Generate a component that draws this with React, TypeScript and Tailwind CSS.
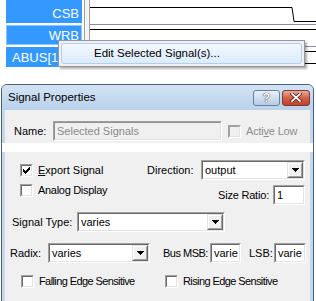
import React from "react";

function Check({ checked = false, disabled = false }: { checked?: boolean; disabled?: boolean }) {
  return (
    <div className="w-[13px] h-[13px] shrink-0 border border-t-[#a0a0a0] border-l-[#a0a0a0] border-b-white border-r-white">
      <div
        className={
          disabled
            ? "w-full h-full border border-t-[#a0a0a0] border-l-[#a0a0a0] border-b-[#e3e3e3] border-r-[#e3e3e3] bg-[#f0f0f0]"
            : "w-full h-full border border-t-[#696969] border-l-[#696969] border-b-[#e3e3e3] border-r-[#e3e3e3] bg-white flex items-center justify-center"
        }
      >
        {checked && (
          <svg width="7" height="7" viewBox="0 0 7 7" shapeRendering="crispEdges">
            <polygon points="0,2 2,4 7,-1 7,2 2,7 0,5" fill="#000" />
          </svg>
        )}
      </div>
    </div>
  );
}

function Sunken({ className, children, disabled = false }: { className: string; children?: React.ReactNode; disabled?: boolean }) {
  return (
    <div className={"h-[20px] shrink-0 border border-t-[#a0a0a0] border-l-[#a0a0a0] border-b-white border-r-white " + className}>
      <div
        className={
          disabled
            ? "w-full h-full border border-t-[#8e8f8f] border-l-[#8e8f8f] border-b-[#e3e3e3] border-r-[#e3e3e3] bg-[#f0f0f0] flex items-center overflow-hidden"
            : "w-full h-full border border-t-[#696969] border-l-[#696969] border-b-[#e3e3e3] border-r-[#e3e3e3] bg-white flex items-center overflow-hidden"
        }
      >
        {children}
      </div>
    </div>
  );
}

function DropBtn() {
  return (
    <div className="w-[16px] h-full shrink-0 border border-t-[#e3e3e3] border-l-[#e3e3e3] border-b-[#696969] border-r-[#696969] bg-[#f0f0f0]">
      <div className="w-full h-full border border-t-white border-l-white border-b-[#a0a0a0] border-r-[#a0a0a0] flex items-center justify-center">
        <svg width="7" height="4" viewBox="0 0 7 4" shapeRendering="crispEdges">
          <polygon points="0,0 7,0 3.5,4" fill="#000" />
        </svg>
      </div>
    </div>
  );
}

function Combo({ className, value }: { className: string; value: string }) {
  return (
    <Sunken className={className}>
      <span className="flex-1 pl-[2px] overflow-hidden whitespace-nowrap leading-none">{value}</span>
      <DropBtn />
    </Sunken>
  );
}

function Field({ className, value }: { className: string; value: string }) {
  return (
    <Sunken className={className}>
      <span className="pl-[2px] whitespace-nowrap leading-none">{value}</span>
    </Sunken>
  );
}

export default function App() {
  return (
    <div className="w-[316px] h-[301px] bg-white overflow-hidden font-['Liberation_Sans',Arial,sans-serif] text-[11px] text-black">
      {/* waveform viewer */}
      <div className="relative h-[67px] flex">
        <div className="w-[84px] pl-[6px] pr-[2px] flex flex-col gap-[2px]">
          <div className="h-[23px] bg-[#3399ff] text-white text-[13px] flex items-end justify-end pr-[3px] pb-[3px] leading-none">CSB</div>
          <div className="h-[20px] bg-[#3399ff] border border-[#8cc4ff] text-white text-[13px] flex items-center justify-end pr-[2px] leading-none">WRB</div>
          <div className="h-[20px] bg-[#3399ff] text-white text-[13px] flex items-center pl-[6px] leading-none whitespace-nowrap overflow-hidden">ABUS[15:0]</div>
        </div>
        <div className="w-[6px] border-l border-r border-[#a0a0a0] bg-[#f4f4f4]" />
        <div className="flex-1 relative">
          <svg width="226" height="67" viewBox="0 0 226 67" className="absolute left-0 top-0" shapeRendering="crispEdges">
            <path d="M0 7.5 H202 L204 21.5 H226" stroke="#000" strokeWidth="1" fill="none" shapeRendering="auto" />
            <line x1="0" y1="24.5" x2="226" y2="24.5" stroke="#8c8ca0" />
            <line x1="0" y1="29.5" x2="226" y2="29.5" stroke="#000" />
            <line x1="0" y1="46.5" x2="226" y2="46.5" stroke="#8c8ca0" />
            <line x1="0" y1="51.5" x2="226" y2="51.5" stroke="#000" />
            <line x1="0" y1="63.5" x2="226" y2="63.5" stroke="#000" />
          </svg>
        </div>
        {/* context menu */}
        <div className="absolute left-[58px] top-[40px] w-[247px] h-[27px] bg-[#f0f0f0] border border-[#979797] shadow-[2px_2px_2px_rgba(0,0,0,0.3)] p-[2px]">
          <div className="relative h-full rounded-[3px] border border-[#aecff7] bg-gradient-to-b from-[#f2f8fe] to-[#dcebfb] flex items-center pl-[32px] text-[11.5px]">
            Edit Selected Signal(s)...
          </div>
        </div>
      </div>

      {/* dialog */}
      <div className="mt-[17px] ml-[1px] w-[313px] h-[218px] border border-[#4c5e78] rounded-t-[6px] overflow-hidden bg-[#c4d8ee]">
        <div className="h-[25px] flex items-center bg-gradient-to-b from-[#d3e3f4] to-[#b9d1ea] pl-[6px] pr-[3px]">
          <span className="text-[11.5px] flex-1">Signal Properties</span>
          <div className="w-[27px] h-[16px] rounded-[3px] border border-[#6c7f99] bg-gradient-to-b from-[#e9f1fa] to-[#b6cbe4] flex items-center justify-center text-white font-bold text-[12px] leading-none [text-shadow:0_0_1px_#334,0_0_1px_#334]">
            ?
          </div>
          <div className="ml-[2px] w-[28px] h-[16px] rounded-[3px] border border-[#7a3a30] bg-gradient-to-b from-[#e9a99a] via-[#d2604a] to-[#c2412c] flex items-center justify-center">
            <svg width="12" height="9" viewBox="0 0 12 9">
              <path d="M2 1 L10 8 M10 1 L2 8" stroke="#4a1c14" strokeWidth="3.4" strokeLinecap="square" />
              <path d="M2 1 L10 8 M10 1 L2 8" stroke="#fff" strokeWidth="1.8" strokeLinecap="square" />
            </svg>
          </div>
        </div>
        {/* name section */}
        <div className="h-[33px] mx-[3px] bg-[#f0f0f0] flex items-start pt-[11px] pl-[9px]">
          <span className="w-[39px] h-[20px] flex items-center">Name:</span>
          <Sunken className="w-[169px]" disabled>
            <span className="pl-[2px] text-[#8a8a8a] leading-none">Selected Signals</span>
          </Sunken>
          <div className="ml-[6px] h-[20px] flex items-center gap-[5px] text-[#8d8d8d]">
            <Check disabled />
            <span className="whitespace-nowrap tracking-[-0.2px]">
              Acti<span className="underline">v</span>e Low
            </span>
          </div>
        </div>
        {/* gap */}
        <div className="h-[9px] bg-white" />
        {/* properties section */}
        <div className="h-[160px] mx-[3px] bg-[#f0f0f0] flex flex-col">
          <div className="mt-[8px] h-[20px] flex items-center">
            <div className="w-[142px] pl-[15px] flex items-center gap-[5px]">
              <Check checked />
              <span>
                <span className="underline">E</span>xport Signal
              </span>
            </div>
            <span className="w-[54px] whitespace-nowrap">Direction:</span>
            <Combo className="w-[104px]" value="output" />
          </div>
          <div className="mt-[4px] h-[21px] flex items-start">
            <div className="w-[213px] pl-[15px] h-[13px] flex items-center gap-[5px]">
              <Check />
              <span className="whitespace-nowrap tracking-[-0.3px]">Analog Display</span>
            </div>
            <div className="mt-[1px] flex items-center">
              <span className="w-[55px] whitespace-nowrap tracking-[-0.2px]">Size Ratio:</span>
              <Field className="w-[32px]" value="1" />
            </div>
          </div>
          <div className="mt-[7px] h-[20px] flex items-center pl-[7px]">
            <span className="w-[65px] whitespace-nowrap">Signal Type:</span>
            <Combo className="w-[148px]" value="varies" />
          </div>
          <div className="mt-[11px] h-[20px] flex items-center pl-[5px]">
            <span className="w-[38px] whitespace-nowrap">Radix:</span>
            <Combo className="w-[102px]" value="varies" />
            <span className="ml-[13px] w-[47px] whitespace-nowrap tracking-[-0.5px]">Bus MSB:</span>
            <Field className="w-[31px]" value="varie" />
            <span className="ml-[8px] w-[25px] whitespace-nowrap">LSB:</span>
            <Field className="w-[32px]" value="varie" />
          </div>
          <div className="mt-[12px] h-[13px] flex items-center pl-[16px]">
            <div className="w-[144px] flex items-center gap-[5px]">
              <Check />
              <span className="whitespace-nowrap tracking-[-0.6px]">Falling Edge Sensitive</span>
            </div>
            <div className="flex items-center gap-[5px]">
              <Check />
              <span className="whitespace-nowrap tracking-[-0.6px]">Rising Edge Sensitive</span>
            </div>
          </div>
        </div>
      </div>
    </div>
  );
}
